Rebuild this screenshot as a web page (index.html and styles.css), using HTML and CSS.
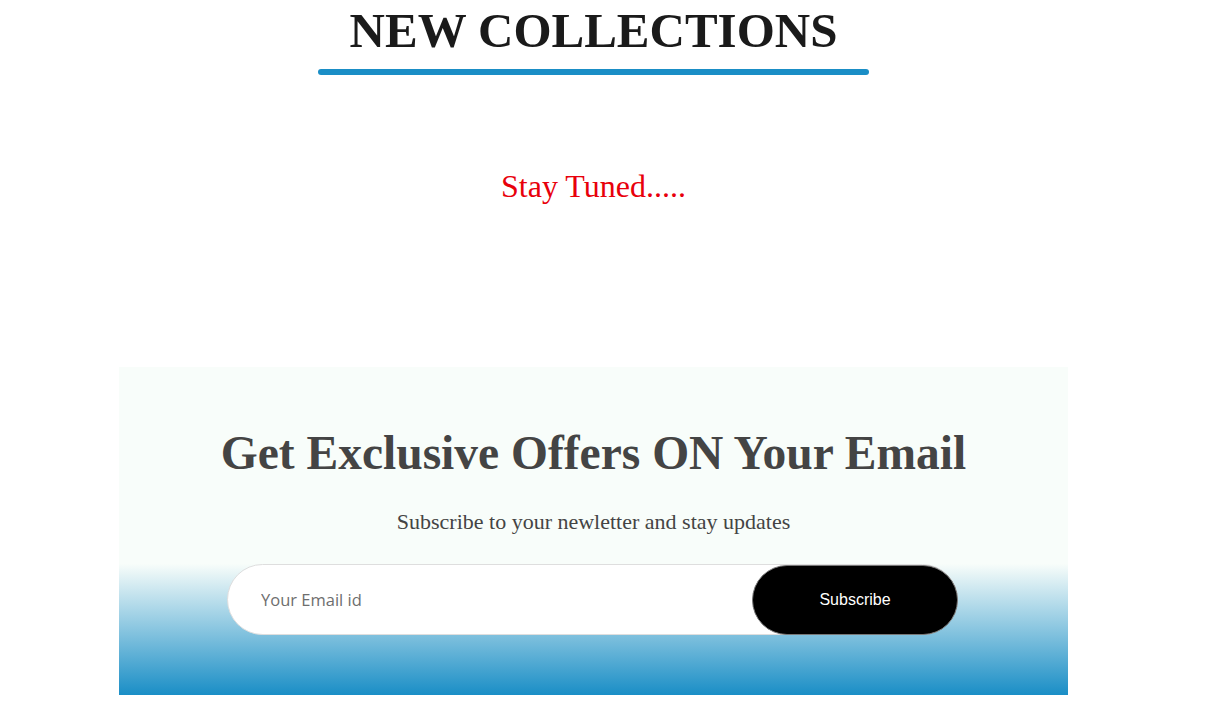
FILE: index.html
```html
<!DOCTYPE html>
<html lang="en">
<head>
<meta charset="utf-8">
<title>New Collections</title>
<link rel="stylesheet" href="styles.css">
</head>
<body>
<div class="page">
  <section class="collections">
    <h1 class="title">NEW COLLECTIONS</h1>
    <div class="title-bar"></div>
    <p class="stay">Stay Tuned.....</p>
  </section>
  <section class="newsletter">
    <h2 class="news-title">Get Exclusive Offers ON Your Email</h2>
    <p class="news-sub">Subscribe to your newletter and stay updates</p>
    <form class="field" onsubmit="return false">
      <input class="email" type="email" placeholder="Your Email id">
      <button class="subscribe" type="submit">Subscribe</button>
    </form>
  </section>
</div>
</body>
</html>
```
FILE: styles.css
```css
* { box-sizing: border-box; }
html, body { margin: 0; padding: 0; background: #fff; }
body { font-family: "Liberation Serif", "Times New Roman", serif; }

.page { width: 1187px; }

.collections { text-align: center; }

.title {
  margin: 0;
  padding-top: 6px;
  font-size: 49px;
  line-height: 49px;
  font-weight: 700;
  color: #1a1a1a;
}

.title-bar {
  width: 551px;
  height: 6px;
  margin: 14px auto 0;
  background: #1a8ec6;
  border-radius: 3px;
}

.stay {
  margin: 95px 0 0;
  font-size: 32px;
  line-height: 32px;
  color: #e8000b;
}

.newsletter {
  width: 949px;
  height: 328px;
  margin: 165px auto 0;
  padding-top: 63px;
  text-align: center;
  background: linear-gradient(to bottom, #f8fdfa 0%, #f8fdfa 60%, #1a8ec6 100%);
}

.news-title {
  margin: 0;
  font-size: 47.5px;
  line-height: 47px;
  font-weight: 700;
  color: #444;
}

.news-sub {
  margin: 34px 0 0;
  font-size: 22px;
  line-height: 22px;
  color: #444;
}

.field {
  display: flex;
  width: 731px;
  height: 71px;
  margin: 31px 0 0 108px;
  background: #fff;
  border: 1px solid #dedede;
  border-radius: 36px;
}

.email {
  flex: 1;
  min-width: 0;
  border: none;
  outline: none;
  background: transparent;
  padding: 0 0 0 33px;
  font-family: "Open Sans", "Noto Sans", sans-serif;
  font-size: 16.5px;
  color: #444;
}
.email::placeholder { color: #6e6e6e; }

.subscribe {
  width: 206px;
  margin: 0 -1px -1px 0;
  border: 1px solid #777;
  border-radius: 36px;
  background: #000;
  color: #fff;
  font-family: "Liberation Sans", Arial, sans-serif;
  font-size: 16px;
  cursor: pointer;
}
```
